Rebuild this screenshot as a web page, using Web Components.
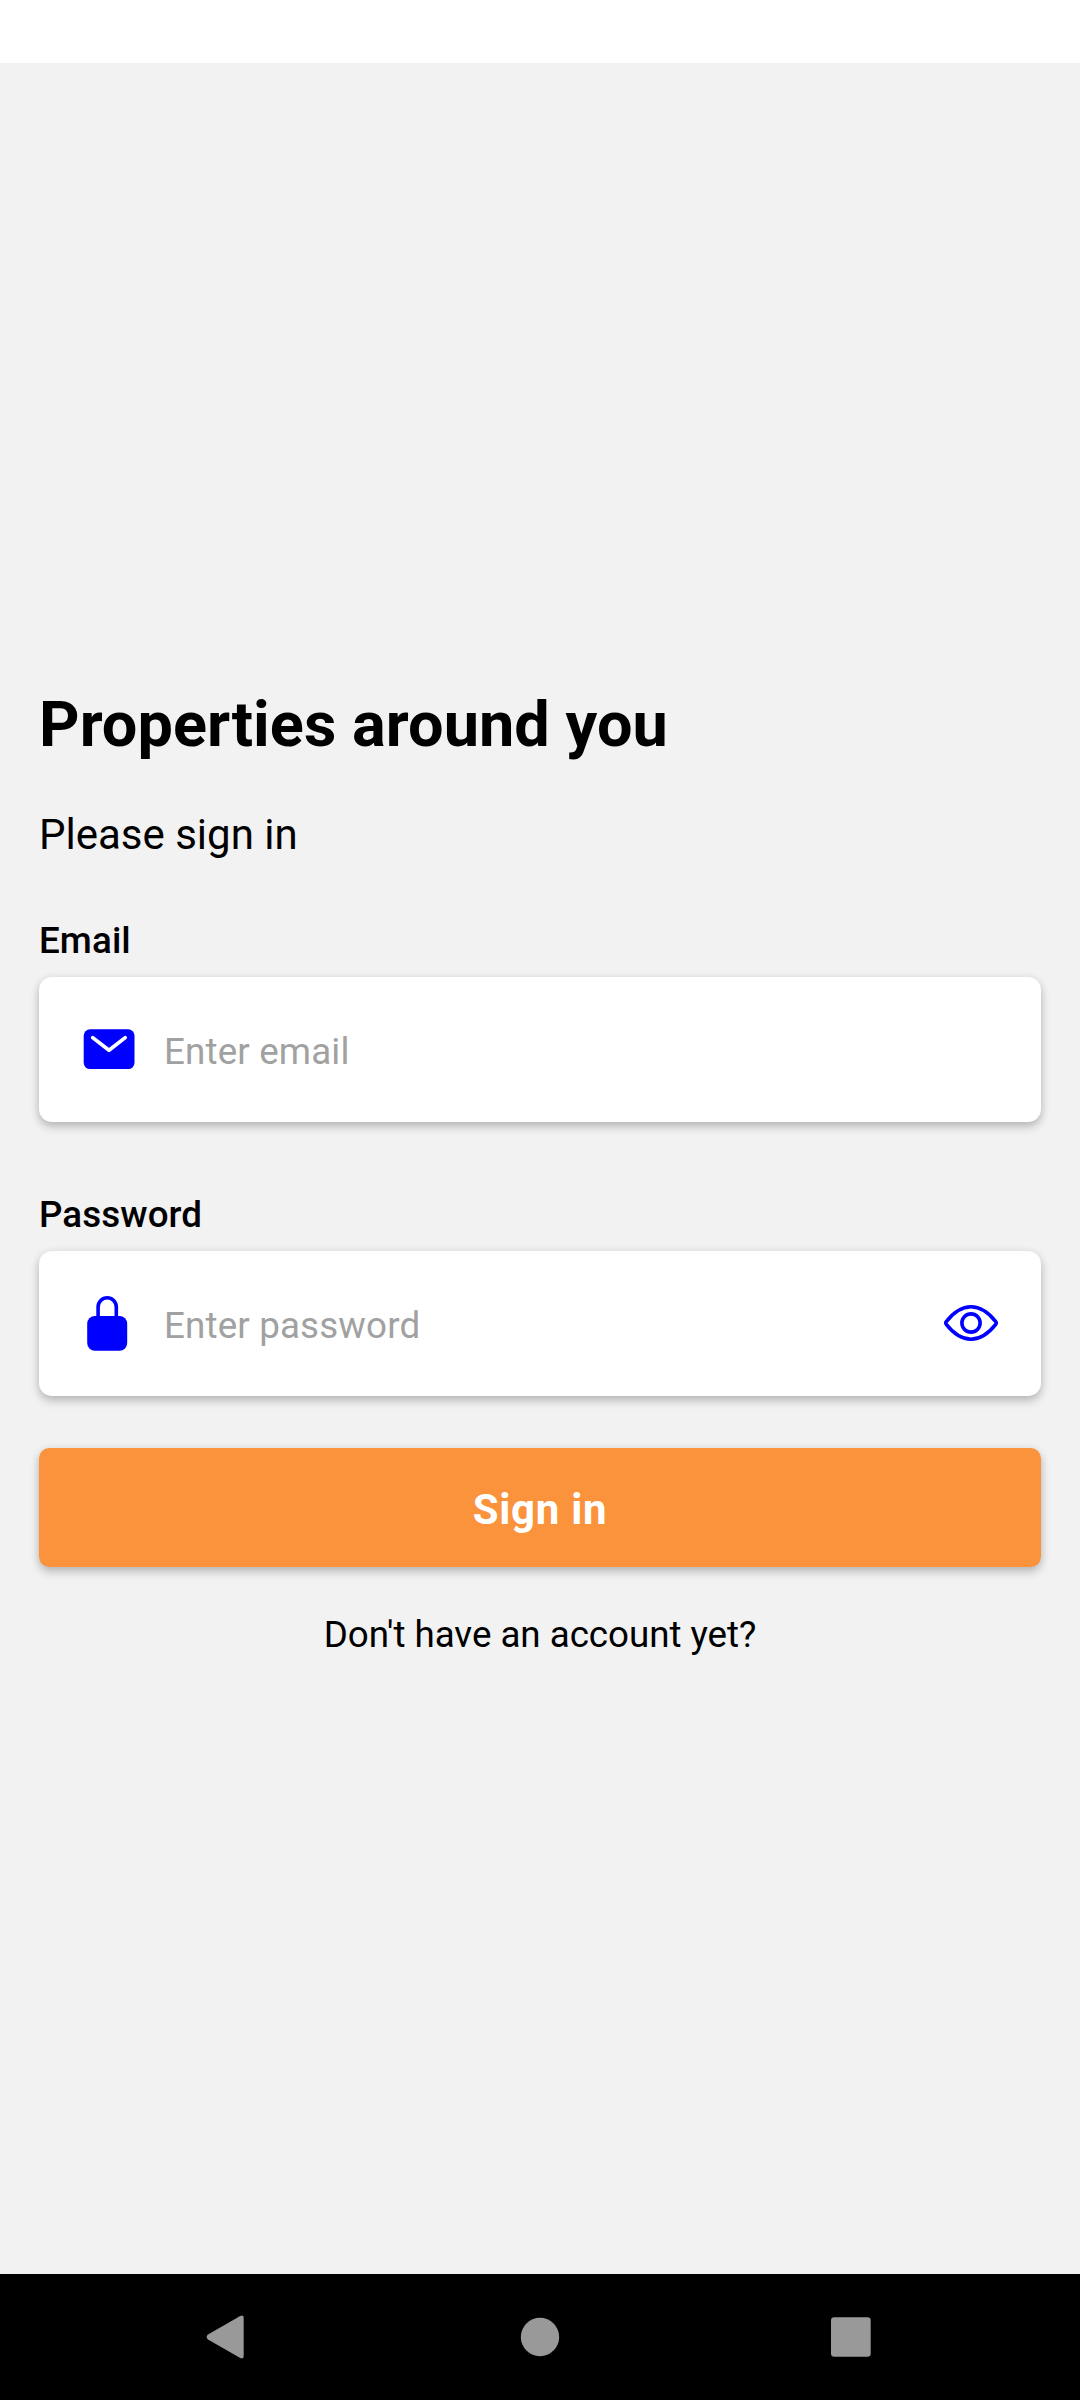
<!DOCTYPE html>
<html lang="en">
<head>
<meta charset="utf-8">
<title>Sign in</title>
<style>
  html, body { margin: 0; padding: 0; background: #f2f2f2; }
  body { font-family: Roboto, "Noto Sans", sans-serif; color: #000; }
</style>
</head>
<body>
<sign-in-screen></sign-in-screen>
<script>
const define = (name, html) => {
  const template = document.createElement('template');
  template.innerHTML = html;
  customElements.define(name, class extends HTMLElement {
    constructor() {
      super();
      this.attachShadow({ mode: 'open' }).append(template.content.cloneNode(true));
    }
  });
};

define('mail-icon', `
  <style>:host{display:block;width:54px;height:55px;flex:none} svg{display:block}</style>
  <svg width="54" height="55" viewBox="0 0 54 55">
    <rect x="1.7" y="7.3" width="50.8" height="39.7" rx="6.3" fill="#00f"/>
    <path d="M10.7 15.6 27 28.3 43.2 15.6" fill="none" stroke="#fff" stroke-width="3.7" stroke-linecap="round" stroke-linejoin="round"/>
  </svg>`);

define('lock-icon', `
  <style>:host{display:block;width:54px;height:55px;flex:none} svg{display:block}</style>
  <svg width="54" height="55" viewBox="0 0 54 55">
    <rect x="5.2" y="20" width="40" height="34.7" rx="7.6" fill="#00f"/>
    <path d="M16.1 22V10.9a9.1 9.1 0 0 1 18.2 0V22" fill="none" stroke="#00f" stroke-width="3.6"/>
  </svg>`);

define('eye-icon', `
  <style>:host{display:block;width:54px;height:55px;flex:none} svg{display:block}</style>
  <svg width="54" height="55" viewBox="0 0 54 55" fill="none" stroke="#00f" stroke-width="3.6" stroke-linejoin="round">
    <path d="M2.3 25.6C9.6 16.3 18.1 10.8 27 10.8S44.4 16.3 51.7 25.6Q52.8 27 51.7 28.4C44.4 37.7 35.9 43.2 27 43.2S9.6 37.7 2.3 28.4Q1.2 27 2.3 25.6Z"/>
    <circle cx="27" cy="27" r="9.1"/>
  </svg>`);

define('form-field', `
  <style>
    :host{display:block}
    .label{font-size:36.75px;line-height:43px;font-weight:500;letter-spacing:.1px;margin-bottom:15px}
    .card{box-sizing:border-box;height:145px;display:flex;align-items:center;padding:0 43px;
      background:#fff;border-radius:13px;
      box-shadow:0 5px 10px rgba(0,0,0,.20),0 1px 10px rgba(0,0,0,.09)}
    .hint{flex:1;margin-left:28px;padding-top:3px;font-size:36.75px;line-height:43px;letter-spacing:.15px;color:#a1a1a1}
  </style>
  <div class="label"><slot name="label"></slot></div>
  <div class="card"><slot name="icon"></slot><div class="hint"><slot></slot></div><slot name="action"></slot></div>`);

define('primary-button', `
  <style>
    :host{box-sizing:border-box;height:119px;display:flex;align-items:center;justify-content:center;
      padding-top:4px;background:#fb923c;color:#fff;border-radius:10.5px;
      font-size:42px;line-height:50px;font-weight:700;letter-spacing:.7px;
      box-shadow:0 5px 10px rgba(0,0,0,.20),0 1px 10px rgba(0,0,0,.09)}
  </style>
  <slot></slot>`);

define('navigation-bar', `
  <style>
    :host{display:flex;flex:none;justify-content:space-between;align-items:center;box-sizing:border-box;
      height:126px;padding:0 205px;background:#000}
    svg{display:block}
  </style>
  <svg width="44" height="44" viewBox="0 0 44 44"><path d="M3 19.6 34.8 1.2Q38.7-.8 38.7 3V41Q38.7 44.8 34.8 42.8L3 24.4Q.2 22 3 19.6Z" fill="#999"/></svg>
  <svg width="44" height="44" viewBox="0 0 44 44"><circle cx="22" cy="22" r="19.2" fill="#999"/></svg>
  <svg width="44" height="44" viewBox="0 0 44 44"><rect x="0" y="2.2" width="39.7" height="39.6" rx="3.2" fill="#999"/></svg>`);

define('sign-in-screen', `
  <style>
    :host{display:flex;flex-direction:column;width:1080px;height:2400px;background:#f2f2f2}
    .status{height:63px;flex:none;background:#fff}
    main{flex:1;display:flex;flex-direction:column;padding:625px 39px 0}
    h1{margin:0 0 48px;font-size:63px;line-height:74px;font-weight:700;letter-spacing:.06px}
    p{margin:0 0 59px;font-size:42px;line-height:50px}
    form-field + form-field{margin-top:71px}
    primary-button{margin-top:52px}
    .link{margin-top:46px;text-align:center;font-size:36.75px;line-height:43px;letter-spacing:-.04px}
  </style>
  <div class="status"></div>
  <main>
    <h1>Properties around you</h1>
    <p>Please sign in</p>
    <form-field><span slot="label">Email</span><mail-icon slot="icon"></mail-icon>Enter email</form-field>
    <form-field><span slot="label">Password</span><lock-icon slot="icon"></lock-icon>Enter password<eye-icon slot="action"></eye-icon></form-field>
    <primary-button>Sign in</primary-button>
    <div class="link">Don't have an account yet?</div>
  </main>
  <navigation-bar></navigation-bar>`);
</script>
</body>
</html>
